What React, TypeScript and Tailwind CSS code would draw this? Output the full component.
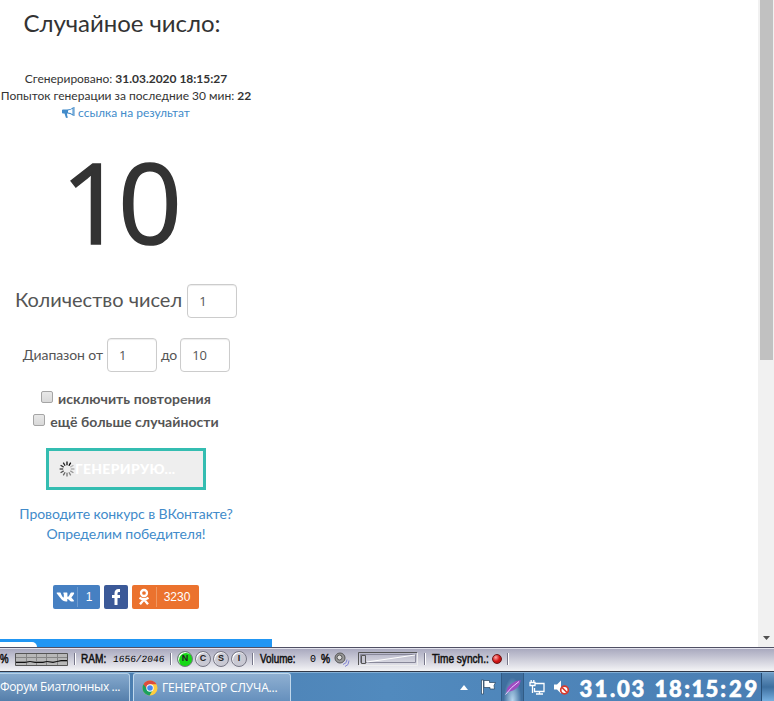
import type { ReactNode } from "react";

const clock = [
  ["3", "w-4"],
  ["1", "w-3.5"],
  [".", "w-[9px]"],
  ["0", "w-[13px]"],
  ["3", "w-4"],
  [" ", "w-2"],
  ["1", "w-3.5"],
  ["8", "w-[15px]"],
  [":", "w-2"],
  ["1", "w-3.5"],
  ["5", "w-3.5"],
  [":", "w-2"],
  ["2", "w-[17px]"],
  ["9", "w-3.5"],
];

const indicators = ["N", "C", "S", "I"];

function NumberField({ value }: { value: string }) {
  return (
    <span className="flex h-[34px] w-[50px] items-center rounded border border-[#ccc] pl-[11px] text-[13px] text-[#555] shadow-[inset_0_1px_1px_rgba(0,0,0,0.075)] font-['Open_Sans']">
      {value}
    </span>
  );
}

function Checkbox() {
  return <span className="mb-1 h-3 w-3 rounded-[2px] border border-[#a5a5a5] bg-linear-to-b from-[#e8e8e8] to-[#d9d9d9]" />;
}

function Separator({ className = "" }: { className?: string }) {
  return <span className={`h-3 w-0.5 shrink-0 border-l border-[#77778a] border-r border-r-white ${className}`} />;
}

function Label({ children, className }: { children: ReactNode; className: string }) {
  return (
    <span className={`shrink-0 whitespace-nowrap text-[12px] leading-4 text-[#111] [-webkit-text-stroke:0.5px_#111] ${className}`}>
      {children}
    </span>
  );
}

function Spinner() {
  return (
    <svg viewBox="-8 -8 16 16" className="h-4 w-4 shrink-0" strokeWidth="1.3">
      {Array.from({ length: 12 }, (_, i) => (
        <line key={i} x1="0" y1="-3.8" x2="0" y2="-7.4" stroke="#000" opacity={1 - ((13 - i) % 12) * 0.07} transform={`rotate(${i * 30})`} />
      ))}
    </svg>
  );
}

function Generator() {
  return (
    <main className="flex h-[639px] w-[252px] flex-col items-center whitespace-nowrap text-[#333]">
      <h1 className="mt-1.5 mr-2 h-[63px] text-[24px] leading-[34px] tracking-[-0.05px]">Случайное число:</h1>
      <p className="mt-px h-[17px] text-[12px] leading-[17px] tracking-[-0.02px]">
        Сгенерировано: <b>31.03.2020 18:15:27</b>
      </p>
      <p className="h-[17px] text-[12px] leading-[17px]">
        Попыток генерации за последние 30 мин: <b>22</b>
      </p>
      <a className="flex h-[17px] items-center gap-[3px] text-[12px] text-[#428bca]">
        <svg viewBox="0 0 13 12" className="h-3 w-[13px]">
          <path d="M0 3.2Q0 2.5 1 2.5H5Q9 2.5 11.5 0V9Q9 6.5 5.5 6.5H5Q5 9 6 10.5L4 11L2.5 6.5H1Q0 6.5 0 5.8Z" fill="currentColor" />
          <path d="M6 3.4Q8.8 3 10.5 1.8V7.2Q8.8 6 6 5.6Z" fill="#fff" />
          <path d="M12 0v9" stroke="currentColor" />
        </svg>
        ссылка на результат
      </a>
      <div className="mt-[10px] mr-4 h-[153px] text-[112px] leading-[140px] tracking-[-7px] [-webkit-text-stroke:1.5px_#333] font-['Open_Sans']">10</div>
      <div className="flex h-[34px] items-center gap-[5px] text-xl text-[#555]">
        <span className="mb-1">Количество чисел</span> <NumberField value="1" />
      </div>
      <div className="mt-5 flex h-[34px] items-center gap-1 pl-px text-sm tracking-[-0.1px] text-[#555]">
        Диапазон от <NumberField value="1" />
        <span className="-mr-px">до</span> <NumberField value="10" />
      </div>
      <div className="mt-[15px] flex h-6 items-center gap-[5px] text-sm font-bold tracking-[0.06px] text-[#555]">
        <Checkbox /> исключить повторения
      </div>
      <div className="flex h-[22px] items-center gap-[5px] text-sm font-bold tracking-[0.04px] text-[#555]">
        <Checkbox /> ещё больше случайности
      </div>
      <button className="mt-[15px] flex h-[42px] w-40 items-center border-[3px] border-[#34bdb1] bg-[#eee] pl-2.5 text-sm font-black tracking-[0.3px] text-white">
        <Spinner />
        ГЕНЕРИРУЮ...
      </button>
      <a className="mt-3.5 text-center text-sm tracking-[-0.09px] text-[#428bca]">
        Проводите конкурс в ВКонтакте?
        <br />
        Определим победителя!
      </a>
      <div className="mt-[41px] flex h-6 gap-1 font-['Liberation_Sans'] text-xs text-white">
        <span className="flex w-[47px] items-center rounded-[2px] bg-[#4680c2]">
          <svg viewBox="0 0 24 24" className="h-6 w-6" fill="#fff">
            <path d="M4 7.6h3.2c.3 0 .5.3.6.6.7 2 1.9 4.2 2.5 4.2.3 0 .5-.2.5-1V9.5c0-1-.6-1.1-.6-1.4 0-.3.3-.5.6-.5h3.1c.4 0 .5.3.5.7v3c0 .4.2.5.3.5.3 0 .5-.1 1-.6 1-1.2 1.5-2.4 1.9-3.1.1-.3.3-.5.8-.5h2c.7 0 .8.4.7.8-.4 1.2-2.4 3.7-2.4 3.7-.3.4-.3.5 0 .9.5.6 2 1.8 2.3 2.7.1.5-.2.8-.7.8h-2.3c-.6 0-.8-.4-1.8-1.4-1-.9-1.4-1-1.6-1-.3 0-.3.1-.3.6v1.2c0 .4-.1.6-1.2.6-1.9 0-4-1.1-5.5-3.2C5.6 10.7 3.6 8.5 3.6 8c0-.2.1-.4.4-.4Z" />
          </svg>
          <span className="h-5 w-[23px] border-l border-[#6c9bd0] text-center leading-5">1</span>
        </span>
        <span className="flex w-6 items-center rounded-[2px] bg-[#3b5998]">
          <svg viewBox="0 0 24 24" className="h-6 w-6" fill="none" stroke="#fff" strokeWidth="3">
            <path d="M16 5.5h-1.5Q12 5.5 12 8.5V20M8 11.5h8" />
          </svg>
        </span>
        <span className="flex w-[67px] items-center rounded-[2px] bg-[#eb722e]">
          <svg viewBox="0 0 24 24" className="h-6 w-6" fill="none" stroke="#fff" strokeWidth="2.3">
            <circle cx="12" cy="8" r="3" />
            <path d="M7.5 12.7Q12 15.5 16.5 12.7M12 14.5L8 19.2M12 14.5L16 19.2" />
          </svg>
          <span className="h-5 w-[43px] border-l border-[#f09760] pr-0.5 text-center leading-5">3230</span>
        </span>
      </div>
    </main>
  );
}

function StatusBar() {
  return (
    <div className="flex h-[25px] items-center border-t border-b border-t-[#505064] border-b-[#303848] bg-linear-to-b from-[#a6a6bc] via-[#cdcdd9] to-[#f4f4f6] pb-px font-['Liberation_Sans'] shadow-[inset_0_1px_0_#e4e4ee]">
      <Label className="w-[15px] origin-left scale-x-[0.8]">%</Label>
      <svg viewBox="0 0 53 13" className="h-[13px] w-[53px]" fill="none">
        <path d="M.5 .5h52v12H.5Z" fill="#b8b8b8" stroke="#555" />
        <path d="M1 4.5h51M1 8.5h51M11.5 1v11M21.5 1v11M31.5 1v11M42.5 1v11" stroke="#858585" />
        <path d="M1 9.5h9l5-1 5 1h8l4-1 6 1 8-2h6" stroke="#111" />
      </svg>
      <Separator className="ml-[6px]" />
      <Label className="ml-[5px] w-8 origin-left scale-x-[0.84]">RAM:</Label>
      <span className="w-[55px] pt-0.5 text-[9.5px] text-black font-['Liberation_Mono']">
        <span className="inline-block -skew-x-6">1656/2046</span>
      </span>
      <Separator className="ml-0.5" />
      <span className="ml-[5px] flex gap-0.5">
        {indicators.map((name) => (
          <span
            key={name}
            className={`flex h-4 w-4 items-center justify-center rounded-full border border-[#777785] text-[9px] font-bold text-[#222] shadow-[inset_1px_1px_0_#fff] ${name === "N" ? "bg-[#16d816]" : "bg-[#c9c9d3]"}`}
          >
            {name}
          </span>
        ))}
      </span>
      <Separator className="ml-[5px]" />
      <Label className="ml-1.5 w-[50px] origin-left scale-x-[0.82]">Volume:</Label>
      <span className="w-[11px] text-[10px] font-['Liberation_Mono'] text-black">0</span>
      <Label className="w-[13px] origin-left scale-x-[0.85]">%</Label>
      <svg viewBox="0 0 16 15" className="h-[15px] w-4" fill="none">
        <ellipse cx="6" cy="6" rx="5" ry="5" fill="#999" stroke="#555" />
        <circle cx="5.5" cy="5.5" r="2.5" fill="#ddd" stroke="#555" />
        <path d="M9 12.5q4-1 4-5M11 14.5q4-1 4-6" stroke="#8285d4" />
      </svg>
      <svg viewBox="0 0 60 14" className="ml-2 h-3.5 w-[60px]" fill="none">
        <path d="M.5 13V.5H59" stroke="#555" />
        <path d="M1 13.5h58.5V1" stroke="#eee" />
        <path d="M2.5 2.5h55v8h-55Z" stroke="#888899" />
        <path d="M9 10L57 3" stroke="#fff" />
        <path d="M3.5 3.5h4v8h-4Z" fill="#c6c6d2" stroke="#555" />
      </svg>
      <Separator className="ml-1.5" />
      <Label className="ml-[6px] w-[60px] origin-left scale-x-[0.84]">Time synch.:</Label>
      <span className="h-2.5 w-2.5 rounded-full border border-[#6b1515] bg-radial-[at_35%_30%] from-[#ffaaaa] via-[#d51515] to-[#981010]" />
      <Separator className="ml-[5px]" />
    </div>
  );
}

function ChromeIcon() {
  return (
    <svg viewBox="0 0 16 16" className="h-4 w-4 shrink-0">
      <circle cx="8" cy="8" r="7.5" fill="#ffcd40" />
      <path d="M8 8L1.5 4.3A7.5 7.5 0 0 0 7.5 15.5L11 9.8Z" fill="#1aa15f" />
      <path d="M1.5 4.3A7.5 7.5 0 0 1 14.5 4.3H8L5 9Z" fill="#dd4b3e" />
      <circle cx="8" cy="8" r="3.7" fill="#fff" />
      <circle cx="8" cy="8" r="2.8" fill="#4688f1" />
    </svg>
  );
}

function Taskbar() {
  return (
    <div className="flex h-[29px] items-start border-t border-[#83afd5] bg-linear-to-r from-[#4979aa] via-[#518abe] to-[#4a7eb3] text-xs text-white font-['Open_Sans']">
      <span className="h-7 w-[130px] overflow-hidden rounded-tr-[3px] border-t border-r border-[#b5d0e7] bg-linear-to-b from-[#85a9cd] to-[#557fab] leading-[26px] tracking-[-0.33px] whitespace-nowrap">
        Форум Биатлонных ...
      </span>
      <span className="ml-[3px] flex h-7 w-[158px] items-center gap-1 overflow-hidden rounded-t-[3px] border border-b-0 border-[#c0d8ec] bg-linear-to-b from-[#8eafd1] to-[#6690bd] pl-2 tracking-[-0.15px] whitespace-nowrap">
        <ChromeIcon />
        ГЕНЕРАТОР СЛУЧА...
      </span>
      <div className="ml-auto flex h-7 items-center">
        <svg viewBox="0 0 8 5" className="mr-3 h-[5px] w-2">
          <path d="M0 5L4 0L8 5Z" fill="#fff" />
        </svg>
        <svg viewBox="0 0 16 16" className="h-4 w-4" fill="#fff" stroke="#26435f" strokeWidth=".7">
          <path d="M1.5 1h2v14h-2ZM4 1.5h5.5V3.5H15.5l-1.5 3 .5 3.5H10V8.5H4Z" />
        </svg>
        <span className="ml-[5px] flex h-7 w-[23px] items-center justify-center border-x border-[#315b85] bg-radial-[at_50%_100%] from-[#b8d7ef] to-[#3f6f9f] to-60%">
          <svg viewBox="0 0 16 16" className="h-4 w-4">
            <path d="M1.5 13Q1 7 11 2L15.5 1Q16 9 5 12.5Z" fill="#9d4cc0" />
            <path d="M.5 15.5Q6 8 14 2.5" stroke="#f0c8ff" fill="none" />
          </svg>
        </span>
        <svg viewBox="0 0 16 16" className="ml-[5px] h-4 w-4" fill="none" stroke="#fff" strokeWidth="1.3">
          <path d="M6.5 4.5H15v8H5.5V9M7 15h7M10.5 13v2M1 3.5h5v3H1ZM2.2 1v2M4.8 1v2M3.5 7v7" />
        </svg>
        <svg viewBox="0 0 16 16" className="ml-2 h-4 w-4" fill="none">
          <path d="M1 5.5h3l4-4v13l-4-4H1Z" fill="#fff" />
          <circle cx="11.5" cy="11" r="3.8" fill="#fff" stroke="#d83a2d" strokeWidth="1.7" />
          <path d="M9 8.5l5 5" stroke="#d83a2d" strokeWidth="1.7" />
        </svg>
        <span className="ml-[9px] flex h-7 items-center pt-1 text-[22px] leading-6 font-black [-webkit-text-stroke:0.6px_#fff] font-['Lato']">
          {clock.map(([char, width], index) => (
            <span key={index} className={`flex h-6 justify-center ${width}`}>
              {char}
            </span>
          ))}
        </span>
        <span className="ml-[3px] h-7 w-[13px] border-l border-[#254d75] bg-linear-to-b from-[#6f9cc6] via-[#3d6f9f] to-[#76afe0]" />
      </div>
    </div>
  );
}

export default function App() {
  return (
    <div className="flex h-[701px] w-[774px] flex-col overflow-hidden bg-white font-['Lato',sans-serif]">
      <div className="flex h-[647px] justify-between">
        <div>
          <Generator />
          <div className="h-2 w-[272px] bg-[#2196f3] pt-[3px]">
            <div className="h-[5px] w-[37px] rounded-tr-[7px] bg-white" />
          </div>
        </div>
        <div className="flex w-4 flex-col items-center justify-between bg-[#f1f1f1] pb-[7px]">
          <div className="ml-px h-[360px] w-[13px] bg-[#c1c1c1]" />
          <svg viewBox="0 0 7 4" className="h-1 w-[7px]">
            <path d="M0 0h7L3.5 4Z" fill="#505050" />
          </svg>
        </div>
      </div>
      <StatusBar />
      <Taskbar />
    </div>
  );
}
